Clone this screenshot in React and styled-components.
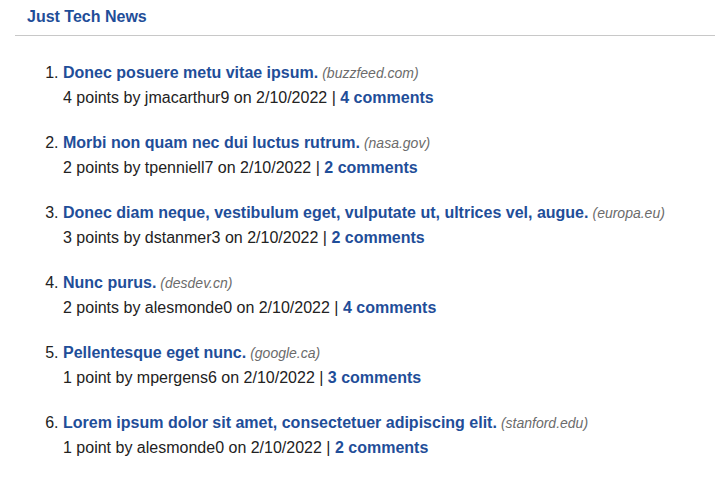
import React from "react";
import styled, { createGlobalStyle } from "styled-components";

const Global = createGlobalStyle`
  html, body { margin: 0; padding: 0; background: #fff; }
  body { font-family: "Liberation Sans", Arial, Helvetica, sans-serif; color: #222; }
`;

const Page = styled.div`
  padding-left: 15px;
`;

const Header = styled.header`
  border-bottom: 1px solid #c8c8c8;
  padding: 7px 12px 8px;
`;

const Brand = styled.a`
  font-size: 16px;
  font-weight: bold;
  color: #1f4e99;
  text-decoration: none;
  line-height: 20px;
`;

const List = styled.ol`
  margin: 25px 0 0 0;
  padding-left: 48px;
  font-size: 16px;
  line-height: 24px;
`;

const Item = styled.li`
  margin-bottom: 21px;
  color: #222;
`;

const TitleLink = styled.a`
  color: #1f4e99;
  font-weight: bold;
  text-decoration: none;
`;

const Domain = styled.span`
  font-style: italic;
  color: #6b6b6b;
  font-size: 14px;
  margin-left: 4px;
`;

const Meta = styled.div`
  color: #222;
  margin-top: 1px;
`;

const Comments = styled.a`
  color: #1f4e99;
  font-weight: bold;
  text-decoration: none;
`;

const items = [
  { title: "Donec posuere metu vitae ipsum.", domain: "buzzfeed.com", points: 4, user: "jmacarthur9", comments: 4 },
  { title: "Morbi non quam nec dui luctus rutrum.", domain: "nasa.gov", points: 2, user: "tpenniell7", comments: 2 },
  { title: "Donec diam neque, vestibulum eget, vulputate ut, ultrices vel, augue.", domain: "europa.eu", points: 3, user: "dstanmer3", comments: 2 },
  { title: "Nunc purus.", domain: "desdev.cn", points: 2, user: "alesmonde0", comments: 4 },
  { title: "Pellentesque eget nunc.", domain: "google.ca", points: 1, user: "mpergens6", comments: 3 },
  { title: "Lorem ipsum dolor sit amet, consectetuer adipiscing elit.", domain: "stanford.edu", points: 1, user: "alesmonde0", comments: 2 },
];

export default function App() {
  return (
    <Page>
      <Global />
      <Header>
        <Brand href="#">Just Tech News</Brand>
      </Header>
      <List>
        {items.map((it, i) => (
          <Item key={i}>
            <TitleLink href="#">{it.title}</TitleLink>
            <Domain>({it.domain})</Domain>
            <Meta>
              {it.points} {it.points === 1 ? "point" : "points"} by {it.user} on 2/10/2022 |{" "}
              <Comments href="#">{it.comments} comments</Comments>
            </Meta>
          </Item>
        ))}
      </List>
    </Page>
  );
}
